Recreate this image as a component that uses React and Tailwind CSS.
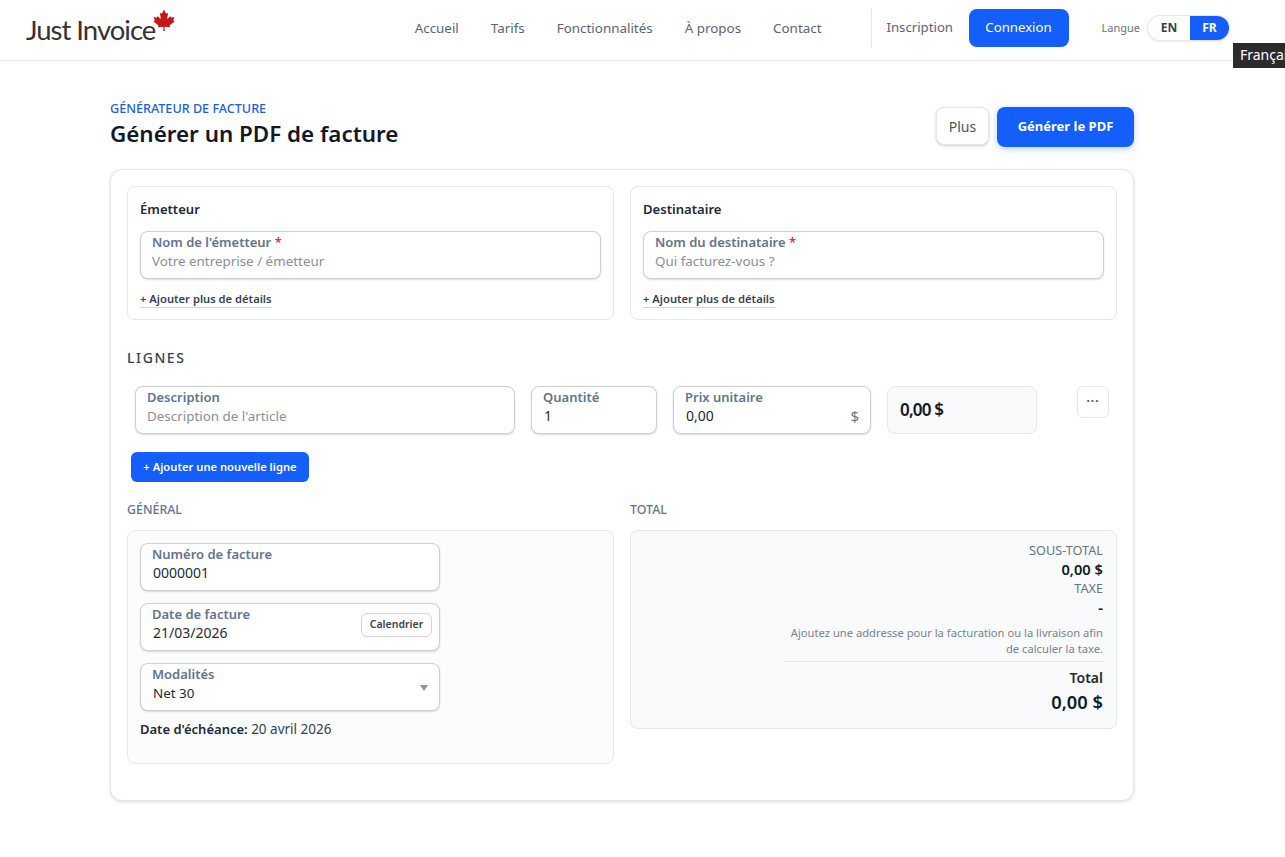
import React from 'react';

const font = { fontFamily: '"Noto Sans", sans-serif' };

function MapleLeaf() {
  return (
    <svg viewBox="0 0 24 24" className="w-[22px] h-[22px] absolute left-[153px] top-[9px]" fill="#c4161c">
      <path d="M12 0.5 L9.9 4.6 C9.6 5.1 9.2 5 8.8 4.8 L7.4 4 L8.4 9.6 C8.6 10.6 8 10.9 7.4 10.2 L5 7.5 L4.6 9 C4.5 9.3 4.3 9.5 3.9 9.4 L0.8 8.8 L1.7 11.8 C1.9 12.4 2 12.8 1.4 13 L0.4 13.5 L5.4 17.5 C5.8 17.9 6 18.2 5.8 18.7 L5.4 20 L10.6 19.4 C11 19.4 11.4 19.6 11.4 20 L11.2 24 L12.8 24 L12.6 20 C12.6 19.6 13 19.4 13.4 19.4 L18.6 20 L18.2 18.7 C18 18.2 18.2 17.9 18.6 17.5 L23.6 13.5 L22.6 13 C22 12.8 22.1 12.4 22.3 11.8 L23.2 8.8 L20.1 9.4 C19.7 9.5 19.5 9.3 19.4 9 L19 7.5 L16.6 10.2 C16 10.9 15.4 10.6 15.6 9.6 L16.6 4 L15.2 4.8 C14.8 5 14.4 5.1 14.1 4.6 Z" />
    </svg>
  );
}

function Header() {
  return (
    <header className="relative h-[61px] border-b border-[#e5e7eb] bg-white flex items-center pr-[56px]">
      <a className="relative w-[200px] h-[60px] block">
        <span className="absolute left-[26px] top-[11px] text-[27.5px] leading-[38px] tracking-[-1px] text-[#333]" style={{ fontFamily: 'Lato, sans-serif' }}>Just Invoice</span>
        <MapleLeaf />
      </a>
      <nav className="ml-auto mb-[4px] flex items-center text-[13.4px] text-[#5b6472]">
        <div className="flex items-center gap-[32px] pr-[49px]">
          <a>Accueil</a>
          <a>Tarifs</a>
          <a>Fonctionnalités</a>
          <a>À propos</a>
          <a>Contact</a>
        </div>
        <div className="flex items-center h-[38px] border-l border-[#e5e7eb] pl-[15px] gap-[16px] text-[13.2px]">
          <a className="w-[66px] whitespace-nowrap">Inscription</a>
          <a className="h-[38px] w-[100px] rounded-lg bg-[#145efc] text-white flex items-center justify-center">Connexion</a>
        </div>
        <div className="flex items-center ml-[33px] gap-[8px]">
          <span className="text-[11px] text-[#6b7280]">Langue</span>
          <div className="flex h-[24px] w-[81px] rounded-full overflow-hidden bg-white shadow-[0_0_0_1px_#e5e7eb,0_1px_3px_rgba(0,0,0,0.15)] text-[12px] font-bold">
            <span className="w-[42px] flex items-center justify-center text-[#374151]">EN</span>
            <span className="w-[39px] flex items-center justify-center bg-[#145efc] text-white">FR</span>
          </div>
        </div>
      </nav>
      <div className="absolute left-[1233px] top-[43px] h-[25px] w-[60px] bg-[#2b2b2b] text-white text-[14px] pl-[7px] leading-[24px] whitespace-nowrap overflow-hidden">Français</div>
    </header>
  );
}

function Field({ label, required, value, placeholder, small, className, children }) {
  return (
    <div className={`relative h-[48px] rounded-lg border border-[#cbd0d7] bg-white shadow-[0_1px_2px_rgba(0,0,0,0.15)] px-[11px] ${className || ''}`}>
      <div className="text-[13px] leading-[20px] font-semibold text-[#64748b]">
        {label}
        {required && <span className="text-[#ef2b3c]"> *</span>}
      </div>
      {placeholder ? (
        <div className="text-[13.4px] leading-[18px] text-[#8b8f96]">{placeholder}</div>
      ) : (
        <div className={`pl-px leading-[18px] text-[#1f2937] ${small ? 'text-[13.4px]' : 'text-[14px]'}`}>{value}</div>
      )}
      {children}
    </div>
  );
}

function PartyCard({ title, label, placeholder }) {
  return (
    <div className="h-[134px] rounded-lg border border-[#e5e7eb] bg-white px-[12px] pt-[12px]">
      <div className="text-[13.1px] leading-[20px] font-semibold text-[#1f2937] mb-[12px]">{title}</div>
      <Field label={label} required placeholder={placeholder} />
      <a className="inline-block mt-[12px] text-[11.2px] leading-[16px] font-semibold text-[#374151] border-b border-[#cbd5e1]">+ Ajouter plus de détails</a>
    </div>
  );
}

function App() {
  return (
    <div className="h-[857px] overflow-hidden bg-white" style={font}>
      <Header />
      <main className="w-[1024px] ml-[110px]">
        <div className="flex items-start justify-between pt-[40px] h-[108px]">
          <div>
            <div className="text-[12.6px] leading-[16px] font-medium text-[#1e5fd6]">GÉNÉRATEUR DE FACTURE</div>
            <h1 className="text-[22.4px] leading-[34px] font-semibold text-[#111827]">Générer un PDF de facture</h1>
          </div>
          <div className="flex items-start gap-[8px] mt-[6px]">
            <button className="h-[38px] w-[53px] rounded-lg border border-[#e5e7eb] bg-white text-[14px] text-[#4b5563] shadow-[0_1px_3px_rgba(0,0,0,0.2)]">Plus</button>
            <button className="h-[40px] w-[137px] rounded-lg bg-[#145efc] text-white text-[13px] font-bold shadow-[0_2px_6px_rgba(20,94,252,0.3)]">Générer le PDF</button>
          </div>
        </div>

        <section className="h-[632px] rounded-xl border border-[#e5e7eb] bg-white shadow-[0_1px_3px_rgba(0,0,0,0.15)] p-[16px]">
          <div className="grid grid-cols-2 gap-[16px]">
            <PartyCard title="Émetteur" label="Nom de l'émetteur" placeholder="Votre entreprise / émetteur" />
            <PartyCard title="Destinataire" label="Nom du destinataire" placeholder="Qui facturez-vous ?" />
          </div>

          <h2 className="mt-[28px] text-[14px] leading-[20px] font-medium tracking-[1.6px] text-[#334155]">LIGNES</h2>

          <div className="mt-[18px] pl-[8px] flex items-start gap-[16px]">
            <Field label="Description" placeholder="Description de l'article" className="w-[380px]" />
            <Field label="Quantité" value="1" className="w-[126px]" />
            <Field label="Prix unitaire" value="0,00" className="w-[198px]">
              <span className="absolute right-[11px] top-[19px] text-[15px] leading-[20px] text-[#64748b]">$</span>
            </Field>
            <div className="w-[150px] h-[48px] rounded-lg border border-[#e5e7eb] bg-[#f8fafc] pl-[12px] flex items-center text-[17px] font-semibold tracking-[-0.8px] text-[#111827]">0,00 $</div>
            <button className="ml-[24px] w-[32px] h-[32px] rounded-md border border-[#e5e7eb] bg-white flex items-center justify-center text-[#4b5563] text-[12px] font-bold leading-none tracking-[1px] pb-[8px]">...</button>
          </div>

          <button className="mt-[18px] ml-[4px] block h-[30px] w-[178px] rounded-md bg-[#145efc] text-white text-[11.2px] font-semibold">+ Ajouter une nouvelle ligne</button>

          <div className="mt-[19px] grid grid-cols-2 gap-[16px]">
            <div>
              <div className="text-[12.4px] leading-[18px] font-medium text-[#64748b] mb-[11px]">GÉNÉRAL</div>
              <div className="h-[234px] rounded-lg border border-[#e5e7eb] bg-[#fbfcfd] px-[12px] pt-[12px]">
                <div className="w-[300px] flex flex-col gap-[12px]">
                  <Field label="Numéro de facture" value="0000001" />
                  <Field label="Date de facture" value="21/03/2026">
                    <button className="absolute right-[7px] top-[9px] h-[24px] w-[71px] rounded-md border border-[#d1d5db] bg-white text-[10.5px] font-semibold text-[#374151]">Calendrier</button>
                  </Field>
                  <Field label="Modalités" value="Net 30" small>
                    <span className="absolute right-[11px] top-[21px] w-0 h-0 border-l-[4px] border-r-[4px] border-t-[6px] border-l-transparent border-r-transparent border-t-[#8a94a3]" />
                  </Field>
                </div>
                <div className="mt-[8px] text-[13.5px] leading-[20px] text-[#374151]"><b className="text-[13px] font-semibold text-[#1f2937]">Date d'échéance:</b> 20 avril 2026</div>
              </div>
            </div>
            <div>
              <div className="text-[12.4px] leading-[18px] font-medium text-[#64748b] mb-[11px]">TOTAL</div>
              <div className="h-[199px] rounded-lg border border-[#e5e7eb] bg-[#f8fafc] px-[13px] pt-[10px] flex flex-col items-end text-right">
                <div className="text-[12.7px] leading-[19px] text-[#6b7280]">SOUS-TOTAL</div>
                <div className="text-[14.7px] leading-[19px] font-semibold text-[#111827]">0,00 $</div>
                <div className="text-[12.7px] leading-[19px] text-[#6b7280]">TAXE</div>
                <div className="text-[14.7px] leading-[19px] font-semibold text-[#111827]">-</div>
                <div className="mt-[8px] w-[319px] text-[11.2px] leading-[16px] text-[#7b828c]">Ajoutez une addresse pour la facturation ou la livraison afin de calculer la taxe.</div>
                <div className="w-[319px] border-t border-[#e2e5ea] mt-[4px] pt-[6px] flex flex-col items-end">
                  <div className="text-[14px] leading-[20px] font-semibold text-[#1f2937]">Total</div>
                  <div className="text-[18.3px] leading-[28px] font-semibold text-[#111827]">0,00 $</div>
                </div>
              </div>
            </div>
          </div>
        </section>
      </main>
    </div>
  );
}

export default App;
